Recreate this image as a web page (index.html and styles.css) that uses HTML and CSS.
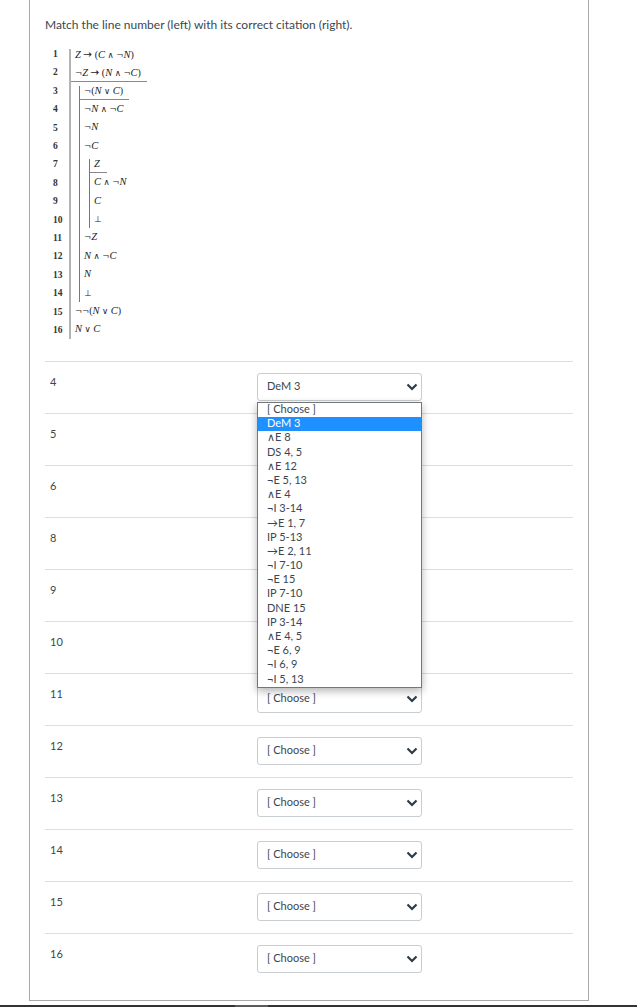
FILE: index.html
```html
<!DOCTYPE html>
<html lang="en">
<head>
<meta charset="utf-8">
<title>Match the line number</title>
<link rel="stylesheet" href="styles.css">
</head>
<body>
<main class="frame">
  <p class="title">Match the line number (left) with its correct citation (right).</p>
  <div class="proof">
    <div class="nums">
      <div>1</div><div>2</div><div>3</div><div>4</div><div>5</div><div>6</div><div>7</div><div>8</div>
      <div>9</div><div>10</div><div>11</div><div>12</div><div>13</div><div>14</div><div>15</div><div>16</div>
    </div>
    <div class="sp l1">
      <div class="prem w1">
        <div class="ln first"><i>Z</i> <b class="arrow">→</b> (<i>C</i> <b>∧</b> <b>¬</b><i>N</i>)</div>
        <div class="ln"><b>¬</b><i>Z</i> <b class="arrow">→</b> (<i>N</i> <b>∧</b> <b>¬</b><i>C</i>)</div>
      </div>
      <div class="sp l2">
        <div class="prem w2">
          <div class="ln first"><b>¬</b>(<i>N</i> <b>∨</b> <i>C</i>)</div>
        </div>
        <div class="ln"><b>¬</b><i>N</i> <b>∧</b> <b>¬</b><i>C</i></div>
        <div class="ln"><b>¬</b><i>N</i></div>
        <div class="ln"><b>¬</b><i>C</i></div>
        <div class="sp l3">
          <div class="prem w3">
            <div class="ln first"><i>Z</i></div>
          </div>
          <div class="ln"><i>C</i> <b>∧</b> <b>¬</b><i>N</i></div>
          <div class="ln"><i>C</i></div>
          <div class="ln"><b>⊥</b></div>
        </div>
        <div class="ln"><b>¬</b><i>Z</i></div>
        <div class="ln"><i>N</i> <b>∧</b> <b>¬</b><i>C</i></div>
        <div class="ln"><i>N</i></div>
        <div class="ln"><b>⊥</b></div>
      </div>
      <div class="ln"><b>¬¬</b>(<i>N</i> <b>∨</b> <i>C</i>)</div>
      <div class="ln"><i>N</i> <b>∨</b> <i>C</i></div>
    </div>
  </div>

  <div class="row">
    <div class="num">4</div>
    <div class="pick">
      <div class="select"><span>DeM 3</span><svg class="chev" viewBox="0 0 12 8"><path d="M1.5 1.5 6 6l4.5-4.5"/></svg></div>
      <ul class="list">
        <li>[ Choose ]</li>
        <li class="on">DeM 3</li>
        <li>∧E 8</li>
        <li>DS 4, 5</li>
        <li>∧E 12</li>
        <li>¬E 5, 13</li>
        <li>∧E 4</li>
        <li>¬I 3-14</li>
        <li>→E 1, 7</li>
        <li>IP 5-13</li>
        <li>→E 2, 11</li>
        <li>¬I 7-10</li>
        <li>¬E 15</li>
        <li>IP 7-10</li>
        <li>DNE 15</li>
        <li>IP 3-14</li>
        <li>∧E 4, 5</li>
        <li>¬E 6, 9</li>
        <li>¬I 6, 9</li>
        <li>¬I 5, 13</li>
      </ul>
    </div>
  </div>
  <div class="row"><div class="num">5</div><div class="pick"><div class="select"><span>[ Choose ]</span><svg class="chev" viewBox="0 0 12 8"><path d="M1.5 1.5 6 6l4.5-4.5"/></svg></div></div></div>
  <div class="row"><div class="num">6</div><div class="pick"><div class="select"><span>[ Choose ]</span><svg class="chev" viewBox="0 0 12 8"><path d="M1.5 1.5 6 6l4.5-4.5"/></svg></div></div></div>
  <div class="row"><div class="num">8</div><div class="pick"><div class="select"><span>[ Choose ]</span><svg class="chev" viewBox="0 0 12 8"><path d="M1.5 1.5 6 6l4.5-4.5"/></svg></div></div></div>
  <div class="row"><div class="num">9</div><div class="pick"><div class="select"><span>[ Choose ]</span><svg class="chev" viewBox="0 0 12 8"><path d="M1.5 1.5 6 6l4.5-4.5"/></svg></div></div></div>
  <div class="row"><div class="num">10</div><div class="pick"><div class="select"><span>[ Choose ]</span><svg class="chev" viewBox="0 0 12 8"><path d="M1.5 1.5 6 6l4.5-4.5"/></svg></div></div></div>
  <div class="row"><div class="num">11</div><div class="pick"><div class="select"><span>[ Choose ]</span><svg class="chev" viewBox="0 0 12 8"><path d="M1.5 1.5 6 6l4.5-4.5"/></svg></div></div></div>
  <div class="row"><div class="num">12</div><div class="pick"><div class="select"><span>[ Choose ]</span><svg class="chev" viewBox="0 0 12 8"><path d="M1.5 1.5 6 6l4.5-4.5"/></svg></div></div></div>
  <div class="row"><div class="num">13</div><div class="pick"><div class="select"><span>[ Choose ]</span><svg class="chev" viewBox="0 0 12 8"><path d="M1.5 1.5 6 6l4.5-4.5"/></svg></div></div></div>
  <div class="row"><div class="num">14</div><div class="pick"><div class="select"><span>[ Choose ]</span><svg class="chev" viewBox="0 0 12 8"><path d="M1.5 1.5 6 6l4.5-4.5"/></svg></div></div></div>
  <div class="row"><div class="num">15</div><div class="pick"><div class="select"><span>[ Choose ]</span><svg class="chev" viewBox="0 0 12 8"><path d="M1.5 1.5 6 6l4.5-4.5"/></svg></div></div></div>
  <div class="row"><div class="num">16</div><div class="pick"><div class="select"><span>[ Choose ]</span><svg class="chev" viewBox="0 0 12 8"><path d="M1.5 1.5 6 6l4.5-4.5"/></svg></div></div></div>
</main>
<footer class="bar"><span class="thumb"></span></footer>
</body>
</html>
```
FILE: styles.css
```css
* { box-sizing: border-box; }
html, body { margin: 0; padding: 0; height: 1007px; overflow: hidden; background: #fff; }
body { font-family: Lato, "Liberation Sans", sans-serif; color: #3a4750; }

.frame {
  width: 560px;
  height: 1001px;
  margin-left: 29px;
  padding: 0 15px;
  border: solid #a8a8a8;
  border-width: 0 1.5px 1.5px 1.5px;
}
.bar {
  height: 2px;
  margin-top: 4px;
  padding-left: 235px;
  background: #333;
}
.thumb { display: block; width: 33px; height: 2px; background: #5a5a5a; }

.title { margin: 0; padding-top: 17px; font-size: 12px; line-height: 16px; }

/* Fitch proof */
.proof {
  display: flex;
  align-items: flex-start;
  height: 316px;
  margin-top: 12px;
  padding-left: 8px;
  font-family: "Liberation Serif", serif;
  font-size: 10px;
  color: #222;
}
.nums { width: 16px; flex: none; font-weight: 700; font-size: 9.5px; line-height: 18.4px; color: #333; }
.sp { margin-top: 4px; padding-left: 4px; border-left: 1px solid #777; }
.l1 { border-left: 2px solid #b4b4b4; padding-left: 4px; }
.l2 { margin-left: 4px; }
.l3 { margin-left: 5px; }
.ln { height: 18.4px; line-height: 18.4px; white-space: nowrap; }
.ln.first { height: 14.4px; line-height: 10.4px; }
.ln i { font-size: 10.5px; }
.ln b { font-family: "DejaVu Sans", sans-serif; font-weight: 400; font-size: 8.5px; }
.ln .arrow { font-size: 10.5px; }
.prem { border-bottom: 1px solid #888; margin-left: -4px; padding-left: 4px; }
.w1 { width: 76px; height: 33px; }
.w2 { width: 49px; height: 14px; }
.w3 { width: 17px; height: 14px; }

/* answer rows */
.row {
  display: grid;
  grid-template-columns: 212px 165px;
  height: 52px;
  border-top: 1px solid #ddd;
  font-size: 11px;
}
.num { padding: 12px 0 0 5px; line-height: 16px; }
.pick { position: relative; padding-top: 11px; }
.select {
  display: flex;
  align-items: center;
  justify-content: space-between;
  height: 28px;
  padding: 0 3.5px 4px 9px;
  border: 1px solid #c7cdd1;
  border-radius: 3px;
  background: #fff;
}
.chev { width: 12px; height: 8px; margin-top: 4px; fill: none; stroke: #2d3b45; stroke-width: 2.2; }

/* open dropdown over the rows below */
.list {
  position: absolute;
  top: 40px;
  left: 0;
  z-index: 2;
  width: 165px;
  margin: 0;
  padding: 0;
  list-style: none;
  background: #fff;
  border: 1px solid #767676;
  box-shadow: 0 3px 8px rgba(0, 0, 0, 0.3);
  line-height: 12.6px;
}
.list li { padding-left: 9px; height: 14.2px; white-space: nowrap; }
.list .on { background: #1e90ff; color: #fff; }
```
